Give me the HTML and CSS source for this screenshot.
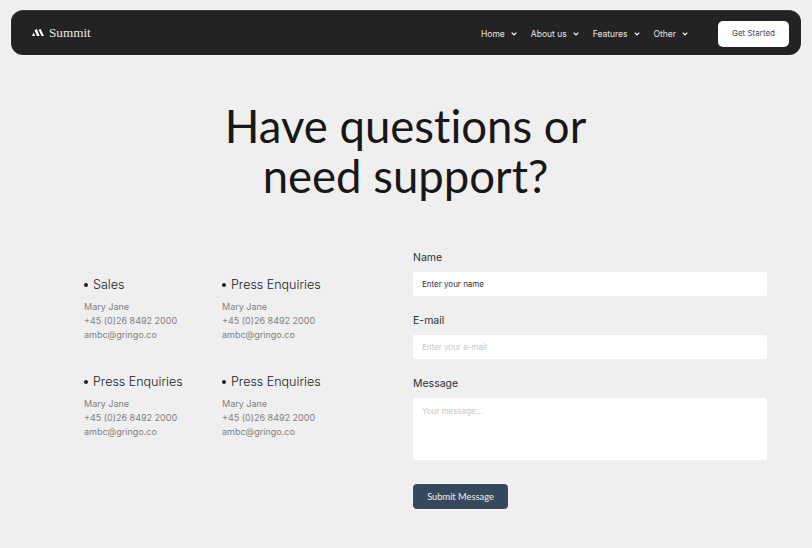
FILE: index.html
```html
<!DOCTYPE html>
<html lang="en">
<head>
<meta charset="utf-8">
<title>Summit</title>
<link rel="stylesheet" href="styles.css">
</head>
<body>
<header class="navbar">
  <div class="brand">
    <svg class="logo" width="12" height="7" viewBox="0 0 12 7"><path d="M0 7 1.6 3.4 3.2 7Z M2.6 1.2 4.8 0 7.6 7H5Z M6.6 .8 8.6 0 12 7H9.6Z" fill="#fff"/></svg>
    <span class="brand-name">Summit</span>
  </div>
  <nav class="nav">
    <a class="nav-link">Home <svg class="chev" width="6" height="4" viewBox="0 0 6 4"><path d="M.7.7 3 3 5.3.7" fill="none" stroke="#fff" stroke-width="1.2"/></svg></a>
    <a class="nav-link">About us <svg class="chev" width="6" height="4" viewBox="0 0 6 4"><path d="M.7.7 3 3 5.3.7" fill="none" stroke="#fff" stroke-width="1.2"/></svg></a>
    <a class="nav-link">Features <svg class="chev" width="6" height="4" viewBox="0 0 6 4"><path d="M.7.7 3 3 5.3.7" fill="none" stroke="#fff" stroke-width="1.2"/></svg></a>
    <a class="nav-link">Other <svg class="chev" width="6" height="4" viewBox="0 0 6 4"><path d="M.7.7 3 3 5.3.7" fill="none" stroke="#fff" stroke-width="1.2"/></svg></a>
  </nav>
  <a class="cta">Get Started</a>
</header>
<h1 class="title">Have questions or<br>need support?</h1>
<main class="content">
  <section class="contacts">
    <div class="contact"><h2 class="contact-title"><span class="dot"></span>Sales</h2><p class="contact-line">Mary Jane</p><p class="contact-line">+45 (0)26 8492 2000</p><p class="contact-line">ambc@gringo.co</p></div>
    <div class="contact"><h2 class="contact-title"><span class="dot"></span>Press Enquiries</h2><p class="contact-line">Mary Jane</p><p class="contact-line">+45 (0)26 8492 2000</p><p class="contact-line">ambc@gringo.co</p></div>
    <div class="contact"><h2 class="contact-title"><span class="dot"></span>Press Enquiries</h2><p class="contact-line">Mary Jane</p><p class="contact-line">+45 (0)26 8492 2000</p><p class="contact-line">ambc@gringo.co</p></div>
    <div class="contact"><h2 class="contact-title"><span class="dot"></span>Press Enquiries</h2><p class="contact-line">Mary Jane</p><p class="contact-line">+45 (0)26 8492 2000</p><p class="contact-line">ambc@gringo.co</p></div>
  </section>
  <form class="form">
    <label class="label">Name</label>
    <div class="field filled">Enter your name</div>
    <label class="label">E-mail</label>
    <div class="field">Enter your e-mail</div>
    <label class="label">Message</label>
    <div class="field area">Your message...</div>
    <button class="submit" type="button">Submit Message</button>
  </form>
</main>
</body>
</html>
```
FILE: styles.css
```css
* { box-sizing: border-box; }
html, body { margin: 0; }
body {
  width: 812px;
  height: 548px;
  overflow: hidden;
  background: #efefef;
  font-family: Inter, "Liberation Sans", sans-serif;
  padding: 10px 11px 0 11px;
}
.navbar {
  height: 45px;
  background: #232323;
  border-radius: 12px;
  border-top: 1px solid #3a3a3a;
  display: flex;
  align-items: center;
  padding: 0 12px 0 20px;
  box-shadow: 0 0 0 1px #f6f6f6;
}
.brand { display: flex; align-items: center; gap: 5px; }
.logo { display: block; margin-left: 1px; margin-bottom: 1px; }
.brand-name {
  font-family: "Liberation Serif", serif;
  font-size: 13.2px;
  color: #e9e9e9;
}
.nav { margin-left: auto; margin-top: 1px; display: flex; gap: 14px; }
.nav-link {
  font-size: 8.5px;
  color: #e6e6e6;
  display: flex;
  align-items: center;
  gap: 6px;
  white-space: nowrap;
}
.cta {
  margin-left: 30px;
  margin-top: 1px;
  width: 71px;
  height: 26px;
  background: #fff;
  border-radius: 5px;
  color: #3f4650;
  font-size: 8px;
  padding-bottom: 1px;
  display: flex;
  align-items: center;
  justify-content: center;
}
.title {
  margin: 46px 0 0;
  text-align: center;
  font-family: Lato, "Open Sans", sans-serif;
  font-variant-ligatures: none;
  font-weight: 400;
  font-size: 45.5px;
  line-height: 50px;
  color: #171717;
  padding-left: 24px;
  padding-right: 25px;
}
.content { display: flex; margin-top: 50px; }
.contacts {
  width: 329px;
  margin-left: 73px;
  padding-top: 26px;
  display: grid;
  grid-template-columns: 138px 138px;
  grid-auto-rows: 97px;
  align-content: start;
}
.contact-title {
  margin: 0 0 7px;
  font-weight: 300;
  font-size: 12.5px;
  line-height: 16px;
  color: #202020;
  display: flex;
  align-items: center;
  white-space: nowrap;
}
.dot {
  width: 4px;
  height: 4px;
  border-radius: 50%;
  background: #202020;
  margin-right: 5px;
}
.contact-line {
  margin: 0;
  font-size: 9px;
  line-height: 14px;
  color: #808080;
}
.form { width: 354px; display: flex; flex-direction: column; align-items: stretch; }
.label {
  font-size: 10.5px;
  line-height: 14px;
  color: #2a2f36;
  margin-bottom: 7px;
}
.field {
  height: 24px;
  background: #fff;
  border-radius: 2px;
  padding: 0 9px;
  margin-bottom: 18px;
  font-size: 8px;
  line-height: 24px;
  color: #c8c8c8;
}
.filled { color: #333; }
.area { height: 62px; padding-top: 1px; line-height: 24px; margin-bottom: 24px; }
.submit {
  width: 95px;
  height: 25px;
  border: 0;
  border-radius: 4px;
  background: #36495c;
  box-shadow: 0 0 0 1px #f8f8f8;
  color: #f0f0f0;
  font: 400 9.3px Lato, sans-serif;
  padding: 0;
}
```
